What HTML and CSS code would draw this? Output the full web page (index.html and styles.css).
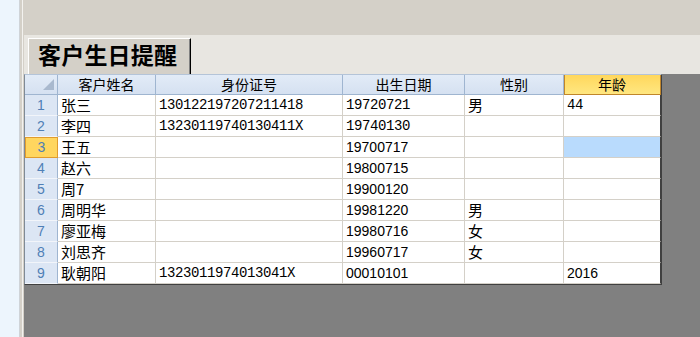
FILE: index.html
```html
<!DOCTYPE html>
<html lang="zh">
<head>
<meta charset="utf-8">
<title>客户生日提醒</title>
<link rel="stylesheet" href="styles.css">
</head>
<body>
<div class="app">
  <div class="side"></div>
  <div class="edge"></div>
  <div class="main">
    <div class="toolbar"></div>
    <div class="tabband"><div class="tab">客户生日提醒</div></div>
    <div class="work">
      <div class="grid">
        <div class="hd corner"><span class="tri"></span></div>
        <div class="hd">客户姓名</div>
        <div class="hd">身份证号</div>
        <div class="hd">出生日期</div>
        <div class="hd">性别</div>
        <div class="hd hd-sel">年龄</div>

        <div class="rs">1</div><div class="c cn">张三</div><div class="c m">130122197207211418</div><div class="c m">19720721</div><div class="c cn">男</div><div class="c m">44</div>
        <div class="rs">2</div><div class="c cn">李四</div><div class="c m">13230119740130411X</div><div class="c m">19740130</div><div class="c"></div><div class="c"></div>
        <div class="rs rs-sel">3</div><div class="c cn">王五</div><div class="c"></div><div class="c s">19700717</div><div class="c"></div><div class="c c-sel"></div>
        <div class="rs">4</div><div class="c cn">赵六</div><div class="c"></div><div class="c s">19800715</div><div class="c"></div><div class="c"></div>
        <div class="rs">5</div><div class="c cn">周7</div><div class="c"></div><div class="c s">19900120</div><div class="c"></div><div class="c"></div>
        <div class="rs">6</div><div class="c cn">周明华</div><div class="c"></div><div class="c s">19981220</div><div class="c cn">男</div><div class="c"></div>
        <div class="rs">7</div><div class="c cn">廖亚梅</div><div class="c"></div><div class="c s">19980716</div><div class="c cn">女</div><div class="c"></div>
        <div class="rs">8</div><div class="c cn">刘思齐</div><div class="c"></div><div class="c s">19960717</div><div class="c cn">女</div><div class="c"></div>
        <div class="rs">9</div><div class="c cn">耿朝阳</div><div class="c m">1323011974013041X</div><div class="c s">00010101</div><div class="c"></div><div class="c s">2016</div>
      </div>
    </div>
  </div>
</div>
</body>
</html>
```
FILE: styles.css
```css
html, body {
  margin: 0;
  padding: 0;
  width: 700px;
  height: 337px;
  overflow: hidden;
}
body {
  font-family: "Noto Sans CJK SC", "Liberation Sans", sans-serif;
}
.app {
  display: flex;
  width: 700px;
  height: 337px;
}
.side {
  width: 19px;
  background: #edf5fd;
  border-right: 1px solid #cfd3d8;
}
.edge {
  width: 4px;
  background: linear-gradient(to right, #d4d0c8 0 2px, #f3f2ef 2px 3px, #d4d0c8 3px 4px);
}
.main {
  flex: 1;
  display: flex;
  flex-direction: column;
  min-width: 0;
}
.toolbar {
  height: 35px;
  background: #d4d0c8;
}
.tabband {
  height: 39px;
  box-sizing: border-box;
  background: #e8e6e1;
  padding: 3px 0 0 4px;
  display: flex;
}
.tab {
  width: 163px;
  box-sizing: border-box;
  background: #d4d0c8;
  border-left: 1px solid #ffffff;
  border-top: 1px solid #ffffff;
  border-right: 1px solid #000000;
  box-shadow: inset -1px 0 0 #808080;
  padding: 0 0 0 9px;
  font-size: 23px;
  font-weight: 700;
  line-height: 30px;
  letter-spacing: 0.2px;
  color: #000;
}
.work {
  flex: 1;
  background: #808080;
}
.grid {
  display: grid;
  grid-template-columns: 33px 98px 187px 122px 99px 97px;
  grid-template-rows: 20px repeat(9, 21px);
  width: max-content;
  border-left: 1px solid #7f8a96;
  border-top: 1px solid #b4c4d8;
  border-right: 1px solid #404040;
  border-bottom: 1px solid #404040;
  background: #ffffff;
}
.grid > div {
  box-sizing: border-box;
  white-space: nowrap;
}
.hd {
  background: linear-gradient(#e2ebf7, #d5e1f1);
  border-right: 1px solid #9fb5d0;
  border-bottom: 1px solid #9fb5d0;
  text-align: center;
  font-size: 14px;
  line-height: 19px;
  color: #000;
}
.hd-sel {
  background: linear-gradient(#ffd75c, #ffe781);
  border-right: 1px solid #c0862b;
  border-bottom: 1px solid #c0862b;
  box-shadow: inset 1px 0 0 #c0862b;
}
.corner {
  display: flex;
  justify-content: flex-end;
  align-items: flex-end;
  padding: 0 3px 4px 0;
}
.tri {
  width: 11px;
  height: 11px;
  background: #a9b9ce;
  clip-path: polygon(100% 0, 100% 100%, 0 100%);
}
.rs {
  background: #dce6f4;
  border-right: 1px solid #9fb5d0;
  border-bottom: 1px solid #f2f5fa;
  text-align: center;
  font-family: "Liberation Sans", sans-serif;
  font-size: 14px;
  line-height: 21px;
  color: #4f7fb6;
}
.rs-sel {
  background: #ffd65f;
  border: 1px solid #e09c2e;
  line-height: 19px;
}
.c {
  border-right: 1px solid #d4d0c8;
  border-bottom: 1px solid #d4d0c8;
  padding-left: 3px;
  line-height: 19px;
  color: #000;
}
.c:nth-child(6n) {
  border-right-color: #404040;
}
.cn {
  font-family: "Noto Sans CJK SC", sans-serif;
  font-size: 15px;
  line-height: 19px;
}
.m {
  font-family: "Liberation Mono", monospace;
  font-size: 14px;
  letter-spacing: -0.4px;
  line-height: 20px;
}
.s {
  font-family: "Liberation Sans", sans-serif;
  font-size: 14px;
  line-height: 20px;
}
.c-sel {
  background: #b9dbfd;
}
```
